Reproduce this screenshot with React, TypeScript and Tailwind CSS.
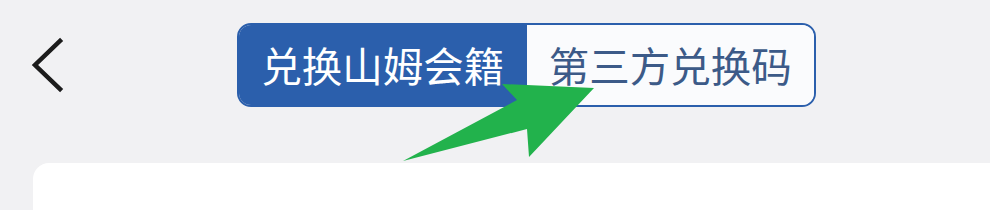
const font = { fontFamily: '"Noto Sans CJK SC", "Noto Sans", sans-serif' };

export default function App() {
  return (
    <div className="relative w-[990px] h-[210px] overflow-hidden bg-[#f1f1f3]" style={font}>
      {/* header */}
      <div className="flex items-start h-[163px] pt-[23px]">
        <div className="w-[237px] pl-[22px] pt-[10px] flex items-center">
          <svg width="52" height="64" viewBox="0 0 52 64" fill="none">
            <path d="M38 8 L13 32 L38 56" stroke="#1c1c1c" strokeWidth="4.5" strokeLinecap="square" />
          </svg>
        </div>
        <div className="flex h-[84px] w-[579px] rounded-[14px] border-2 border-[#2b5fac] overflow-hidden">
          <div className="flex-1 flex items-center justify-center bg-[#2b5fac] text-white text-[40.5px] leading-none">
            兑换山姆会籍
          </div>
          <div className="flex-1 flex items-center justify-center bg-[#fafbfd] text-[#3c5a88] text-[40.5px] leading-none">
            第三方兑换码
          </div>
        </div>
      </div>

      {/* card */}
      <div className="ml-[33px] mr-[-40px] h-[120px] rounded-[16px] bg-white" />

      {/* annotation arrow */}
      <svg className="absolute left-0 top-0" width="990" height="210" viewBox="0 0 990 210">
        <polygon
          points="403,161 517,100 502,84 594,88 529,157 527,129"
          fill="#22b24c"
        />
      </svg>
    </div>
  );
}
